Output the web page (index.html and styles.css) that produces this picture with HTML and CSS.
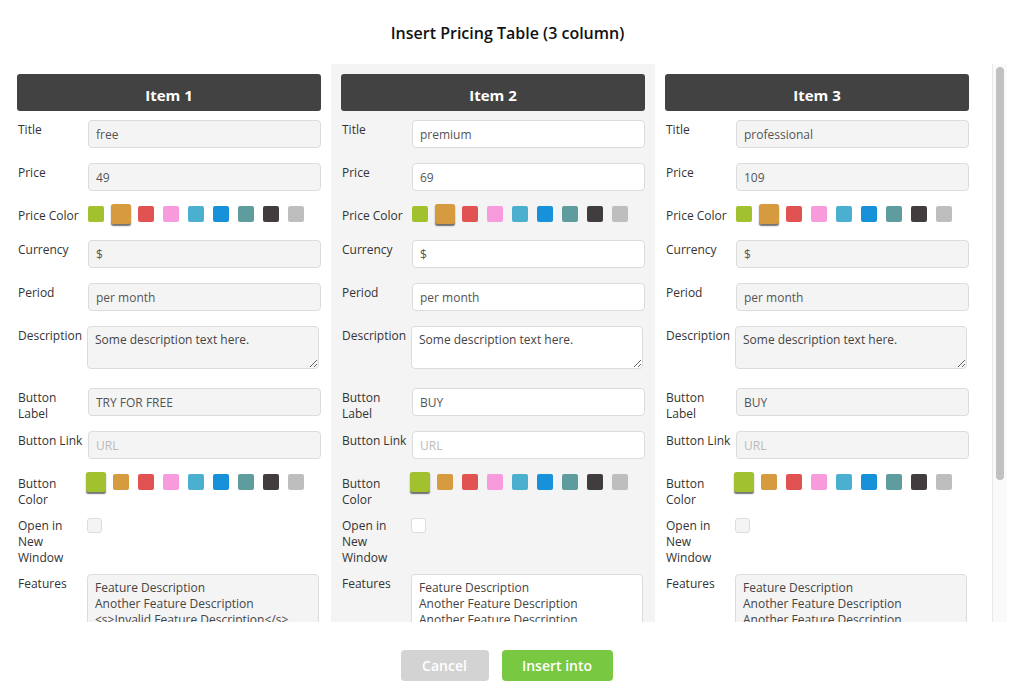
FILE: index.html
```html
<!DOCTYPE html>
<html lang="en">
<head>
<meta charset="utf-8">
<title>Insert Pricing Table</title>
<link rel="stylesheet" href="styles.css">
</head>
<body>
<div class="dialog">
  <h1 class="dialog-title">Insert Pricing Table (3 column)</h1>
  <div class="scroll-area">
    <div class="viewport">
      <div class="columns">
        <section class="col">
          <h2 class="col-head">Item 1</h2>
          <div class="row"><span class="lbl">Title</span><div class="ctl"><input class="field" value="free"></div></div>
          <div class="row"><span class="lbl">Price</span><div class="ctl"><input class="field" value="49"></div></div>
          <div class="row row-sw"><span class="lbl">Price Color</span><div class="ctl swatches"><span class="sw c1"></span><span class="sw c2 sel"></span><span class="sw c3"></span><span class="sw c4"></span><span class="sw c5"></span><span class="sw c6"></span><span class="sw c7"></span><span class="sw c8"></span><span class="sw c9"></span></div></div>
          <div class="row"><span class="lbl">Currency</span><div class="ctl"><input class="field" value="$"></div></div>
          <div class="row"><span class="lbl">Period</span><div class="ctl"><input class="field" value="per month"></div></div>
          <div class="row"><span class="lbl">Description</span><div class="ctl"><textarea class="field area">Some description text here.</textarea></div></div>
          <div class="row"><span class="lbl">Button Label</span><div class="ctl"><input class="field" value="TRY FOR FREE"></div></div>
          <div class="row"><span class="lbl">Button Link</span><div class="ctl"><input class="field" placeholder="URL"></div></div>
          <div class="row row-sw"><span class="lbl">Button Color</span><div class="ctl swatches"><span class="sw c1 sel"></span><span class="sw c2"></span><span class="sw c3"></span><span class="sw c4"></span><span class="sw c5"></span><span class="sw c6"></span><span class="sw c7"></span><span class="sw c8"></span><span class="sw c9"></span></div></div>
          <div class="row row-multi"><span class="lbl">Open in New Window</span><div class="ctl"><span class="check"></span></div></div>
          <div class="row"><span class="lbl">Features</span><div class="ctl"><textarea class="field area features">Feature Description
Another Feature Description
&lt;s&gt;Invalid Feature Description&lt;/s&gt;</textarea></div></div>
        </section>
        <section class="col active">
          <h2 class="col-head">Item 2</h2>
          <div class="row"><span class="lbl">Title</span><div class="ctl"><input class="field" value="premium"></div></div>
          <div class="row"><span class="lbl">Price</span><div class="ctl"><input class="field" value="69"></div></div>
          <div class="row row-sw"><span class="lbl">Price Color</span><div class="ctl swatches"><span class="sw c1"></span><span class="sw c2 sel"></span><span class="sw c3"></span><span class="sw c4"></span><span class="sw c5"></span><span class="sw c6"></span><span class="sw c7"></span><span class="sw c8"></span><span class="sw c9"></span></div></div>
          <div class="row"><span class="lbl">Currency</span><div class="ctl"><input class="field" value="$"></div></div>
          <div class="row"><span class="lbl">Period</span><div class="ctl"><input class="field" value="per month"></div></div>
          <div class="row"><span class="lbl">Description</span><div class="ctl"><textarea class="field area">Some description text here.</textarea></div></div>
          <div class="row"><span class="lbl">Button Label</span><div class="ctl"><input class="field" value="BUY"></div></div>
          <div class="row"><span class="lbl">Button Link</span><div class="ctl"><input class="field" placeholder="URL"></div></div>
          <div class="row row-sw"><span class="lbl">Button Color</span><div class="ctl swatches"><span class="sw c1 sel"></span><span class="sw c2"></span><span class="sw c3"></span><span class="sw c4"></span><span class="sw c5"></span><span class="sw c6"></span><span class="sw c7"></span><span class="sw c8"></span><span class="sw c9"></span></div></div>
          <div class="row row-multi"><span class="lbl">Open in New Window</span><div class="ctl"><span class="check"></span></div></div>
          <div class="row"><span class="lbl">Features</span><div class="ctl"><textarea class="field area features">Feature Description
Another Feature Description
Another Feature Description</textarea></div></div>
        </section>
        <section class="col">
          <h2 class="col-head">Item 3</h2>
          <div class="row"><span class="lbl">Title</span><div class="ctl"><input class="field" value="professional"></div></div>
          <div class="row"><span class="lbl">Price</span><div class="ctl"><input class="field" value="109"></div></div>
          <div class="row row-sw"><span class="lbl">Price Color</span><div class="ctl swatches"><span class="sw c1"></span><span class="sw c2 sel"></span><span class="sw c3"></span><span class="sw c4"></span><span class="sw c5"></span><span class="sw c6"></span><span class="sw c7"></span><span class="sw c8"></span><span class="sw c9"></span></div></div>
          <div class="row"><span class="lbl">Currency</span><div class="ctl"><input class="field" value="$"></div></div>
          <div class="row"><span class="lbl">Period</span><div class="ctl"><input class="field" value="per month"></div></div>
          <div class="row"><span class="lbl">Description</span><div class="ctl"><textarea class="field area">Some description text here.</textarea></div></div>
          <div class="row"><span class="lbl">Button Label</span><div class="ctl"><input class="field" value="BUY"></div></div>
          <div class="row"><span class="lbl">Button Link</span><div class="ctl"><input class="field" placeholder="URL"></div></div>
          <div class="row row-sw"><span class="lbl">Button Color</span><div class="ctl swatches"><span class="sw c1 sel"></span><span class="sw c2"></span><span class="sw c3"></span><span class="sw c4"></span><span class="sw c5"></span><span class="sw c6"></span><span class="sw c7"></span><span class="sw c8"></span><span class="sw c9"></span></div></div>
          <div class="row row-multi"><span class="lbl">Open in New Window</span><div class="ctl"><span class="check"></span></div></div>
          <div class="row"><span class="lbl">Features</span><div class="ctl"><textarea class="field area features">Feature Description
Another Feature Description
Another Feature Description</textarea></div></div>
        </section>
      </div>
    </div>
    <div class="scrollbar"><div class="thumb"></div></div>
  </div>
  <div class="actions">
    <button class="btn btn-cancel">Cancel</button>
    <button class="btn btn-insert">Insert into</button>
  </div>
</div>
</body>
</html>
```
FILE: styles.css
```css
html, body {
  margin: 0;
  padding: 0;
  background: #fff;
}
body {
  font-family: "Open Sans", "Liberation Sans", sans-serif;
  color: #333;
}
.dialog {
  width: 1015px;
  height: 688px;
  overflow: hidden;
}
.dialog-title {
  margin: 0;
  padding: 23px 0 0;
  box-sizing: border-box;
  height: 64px;
  font-size: 16px;
  line-height: 20px;
  font-weight: 600;
  color: #111;
  text-align: center;
}
.scroll-area {
  display: flex;
  margin-left: 7px;
  width: 1000px;
  height: 558px;
}
.viewport {
  width: 985px;
  flex: none;
  overflow: hidden;
}
.scrollbar {
  width: 15px;
  flex: none;
  box-sizing: border-box;
  padding: 3px 3px 0 3px;
  border-left: 1px solid #e8e8e8;
  background: #fafafa;
}
.thumb {
  height: 413px;
  border-radius: 4px;
  background: #c1c1c1;
}
.columns {
  display: flex;
  width: 972px;
}
.col {
  width: 324px;
  flex: none;
  box-sizing: border-box;
  padding: 10px 10px 0 10px;
  min-height: 743px;
}
.col.active {
  background: #f4f4f4;
}
.col-head {
  margin: 0 0 9px;
  height: 37px;
  box-sizing: border-box;
  padding-top: 6px;
  line-height: 31px;
  background: #424242;
  border-radius: 3px;
  color: #fff;
  font-size: 15px;
  font-weight: 700;
  text-align: center;
}
.row {
  display: flex;
  align-items: flex-start;
  margin-bottom: 10px;
}
.lbl {
  flex: none;
  width: 70px;
  padding: 2px 0 0 1px;
  margin-bottom: -2px;
  font-size: 12px;
  line-height: 16px;
  color: #333;
}
.ctl {
  flex: 1;
  min-width: 0;
}
.field {
  display: block;
  width: 100%;
  height: 28px;
  box-sizing: border-box;
  margin: 0 0 5px;
  padding: 0 7px;
  border: 1px solid #dcdcdc;
  border-radius: 4px;
  background: #f4f4f4;
  font-family: "Open Sans", "Liberation Sans", sans-serif;
  font-size: 12px;
  color: #555;
  outline: none;
}
.field::placeholder {
  color: #bbb;
}
.col.active .field,
.col.active .check {
  background: #fff;
}
.area {
  height: 43px;
  margin: 0 0 9px -1px;
  width: calc(100% - 1px);
  padding: 5px 7px;
  line-height: 16px;
  resize: both;
  color: #444;
}
.area.features {
  height: 130px;
}
.swatches {
  display: flex;
  gap: 9px;
  padding-bottom: 8px;
}
.sw {
  width: 16px;
  height: 16px;
  border-radius: 2px;
  flex: none;
}
.sw.sel {
  transform: scale(1.25);
  box-shadow: 0 1px 1px rgba(0, 0, 0, 0.55);
}
.c1 { background: #a2c12f; }
.c2 { background: #d59b3e; }
.c3 { background: #e05352; }
.c4 { background: #f79bdc; }
.c5 { background: #4bb0d0; }
.c6 { background: #1791da; }
.c7 { background: #5f9c9e; }
.c8 { background: #413c3d; }
.c9 { background: #bebebe; }
.check {
  display: block;
  width: 15px;
  height: 15px;
  box-sizing: border-box;
  margin: 2px 0 0 -1px;
  border: 1px solid #dcdcdc;
  border-radius: 3px;
  background: #f4f4f4;
}
.actions {
  display: flex;
  justify-content: center;
  gap: 13px;
  padding: 28px 2px 0 0;
}
.btn {
  height: 31px;
  border: 0;
  border-radius: 4px;
  padding: 0;
  white-space: nowrap;
  font-family: "Open Sans", "Liberation Sans", sans-serif;
  font-size: 14px;
  font-weight: 600;
  color: #fff;
}
.btn-cancel {
  background: #d3d3d3;
  width: 88px;
}
.btn-insert {
  background: #78c841;
  width: 111px;
}
```
